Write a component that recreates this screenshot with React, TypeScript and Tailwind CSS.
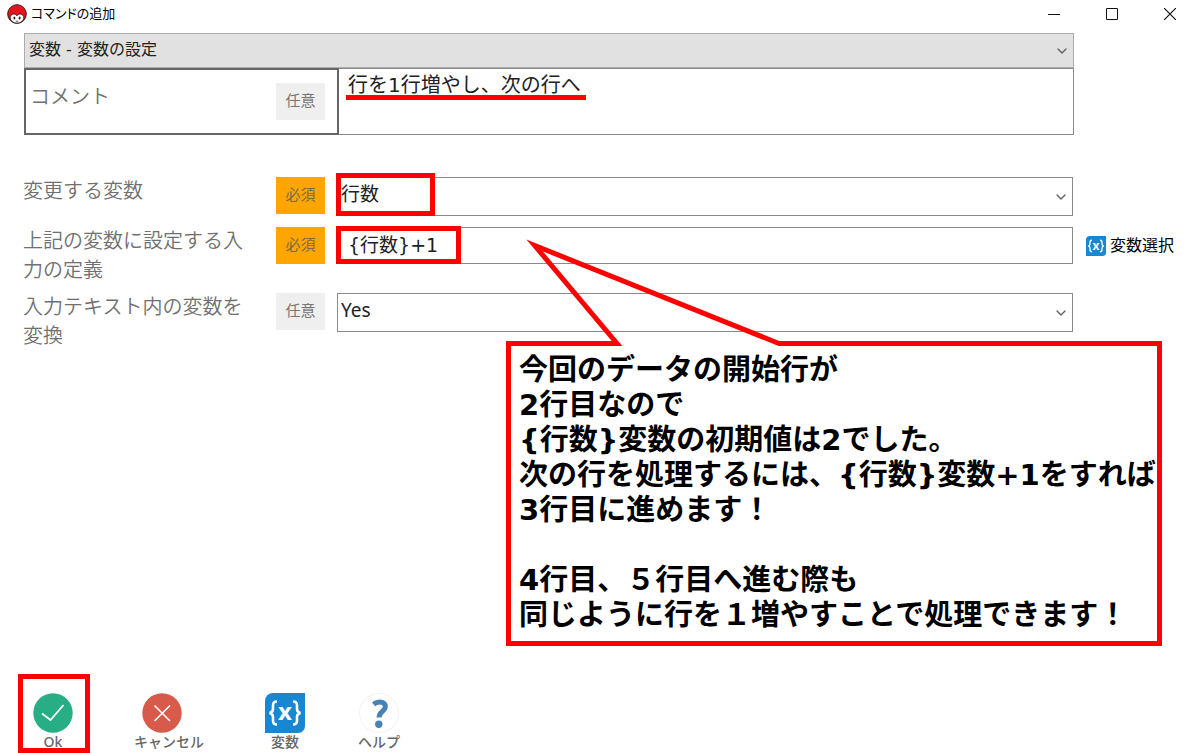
import React from 'react';
import { ChevronDown } from 'lucide-react';

const Badge: React.FC<{ required?: boolean }> = ({ required }) => (
  <span
    className={`flex h-[37px] w-[49px] shrink-0 items-center justify-center text-[15px] ${
      required ? 'bg-[#ffa500] text-[#7d6a45]' : 'bg-[#efefef] text-[#777]'
    }`}
  >
    {required ? '必須' : '任意'}
  </span>
);

const AppLogo: React.FC = () => (
  <svg className="h-5 w-5" viewBox="0 0 20 20" aria-hidden="true">
    <circle cx="10" cy="10" r="9.3" fill="#e8141c" stroke="#3a1a1a" strokeWidth="1" />
    <path d="M3.2 15c-.6-3.6 1.6-5 3.600-5 1.600 0 2.600.7 3.200 1.800.6-1.100 1.600-1.800 3.200-1.800 2 0 4.200 1.400 3.600 5C15.600 17.600 13 19.200 10 19.200S4.400 17.600 3.200 15z" fill="#fff" stroke="#3a1a1a" strokeWidth="1" />
    <ellipse cx="7.4" cy="14" rx="1" ry="1.600" fill="#222" />
    <ellipse cx="12.6" cy="14" rx="1" ry="1.600" fill="#222" />
    <path d="M8.8 17.200h2.400" stroke="#222" strokeWidth=".8" />
  </svg>
);

const VariableIcon: React.FC<{ className: string }> = ({ className }) => (
  <svg className={className} viewBox="0 0 40 40" aria-hidden="true">
    <path d="M8 0h32v33a7 7 0 0 1-7 7H0V8a8 8 0 0 1 8-8z" fill="#1687d0" />
    <path
      d="M12 8.500c-3.500 0-4 1.500-4 4v3.500c0 2.500-.8 3.500-3.500 4 2.700.5 3.500 1.500 3.500 4v3.500c0 2.500.5 4 4 4M28 8.500c3.500 0 4 1.500 4 4v3.500c0 2.500.8 3.500 3.500 4-2.700.5-3.500 1.500-3.500 4v3.500c0 2.500-.5 4-4 4"
      fill="none"
      stroke="#fff"
      strokeWidth="2.600"
    />
    <text x="20" y="27" textAnchor="middle" fill="#fff" fontSize="24" fontWeight="700" fontFamily="Open Sans, sans-serif">
      x
    </text>
  </svg>
);

const OkIcon: React.FC = () => (
  <svg className="h-10 w-10" viewBox="0 0 40 40" aria-hidden="true">
    <circle cx="20" cy="20" r="19.7" fill="#27ae85" />
    <path d="M9 20.5l8.500 6.500L30.500 12" fill="none" stroke="#fff" strokeWidth="1.8" />
  </svg>
);

const CancelIcon: React.FC = () => (
  <svg className="ml-2 h-10 w-10" viewBox="0 0 40 40" aria-hidden="true">
    <circle cx="20" cy="20" r="19.7" fill="#d75a4a" />
    <path d="M12.5 12.5l15.500 15.500M28 12.500L12.500 28" stroke="#fff" strokeWidth="1.6" />
  </svg>
);

const HelpIcon: React.FC = () => (
  <svg className="h-10 w-10" viewBox="0 0 40 40" aria-hidden="true">
    <circle cx="20" cy="20" r="19.5" fill="#fff" stroke="#f1f1f1" />
    <path d="M14.500 11.200c2-1.600 4-2.200 6.200-2.200 3.600 0 5.600 1.800 5.600 4.600 0 5-6.300 4.800-6.300 11" fill="none" stroke="#4682b4" strokeWidth="5" />
    <circle cx="19.800" cy="31.300" r="3.700" fill="#4682b4" />
  </svg>
);

interface SelectBoxProps {
  id: string;
  value: string;
  className: string;
  label?: string;
}

const SelectBox: React.FC<SelectBoxProps> = ({ id, value, className, label }) => (
  <div className="relative">
    <select id={id} aria-label={label} className={`block w-full appearance-none border outline-none ${className}`}>
      <option>{value}</option>
    </select>
    <ChevronDown className="pointer-events-none absolute top-1/2 right-1 h-4 w-4 -translate-y-1/2 text-[#606060]" strokeWidth={2} />
  </div>
);

interface FieldRowProps {
  id: string;
  label: string;
  required?: boolean;
  children: React.ReactNode;
  extra?: React.ReactNode;
}

const FieldRow: React.FC<FieldRowProps> = ({ id, label, required, children, extra }) => (
  <div className="flex min-h-[42px] items-start">
    <label htmlFor={id} className="w-[222px] shrink-0 text-xl leading-[29px] font-[350] text-[#707070]">
      {label}
    </label>
    <div className="mr-3 ml-[31px]">
      <Badge required={required} />
    </div>
    <div className="relative min-w-0 flex-1">{children}</div>
    <div className="w-[127px] shrink-0 pl-[13px]">{extra}</div>
  </div>
);

const Callout: React.FC = () => (
  <div className="absolute top-[341px] left-[506px] w-[656px] border-[5px] border-t-0 border-[#ff0000] pt-3 pb-2 pl-2">
    <svg className="pointer-events-none absolute -top-[111px] -left-[5px] h-[120px] w-[656px]" viewBox="0 0 656 120" aria-hidden="true">
      <path
        d="M0 113.5H111L28.7 15.5L273 113.5H656"
        fill="none"
        stroke="#ff0000"
        strokeWidth="5"
        strokeMiterlimit="10"
      />
    </svg>
    <p className="text-[29px] leading-[35px] font-bold whitespace-nowrap text-black">
      今回のデータの開始行が
      <br />
      2行目なので
      <br />
      {'{行数}'}変数の初期値は2でした。
      <br />
      次の行を処理するには、{'{行数}'}変数+1をすれば
      <br />
      3行目に進めます！
      <br />
      <br />
      4行目、５行目へ進む際も
      <br />
      同じように行を１増やすことで処理できます！
    </p>
  </div>
);

export default function App() {
  const footerButton = "flex flex-col font-['Noto_Sans','Noto_Sans_CJK_JP',sans-serif] text-sm leading-[18px] font-medium text-[#666]";

  return (
    <div className="relative flex min-h-screen flex-col bg-white font-['DejaVu_Sans','Noto_Sans_CJK_JP',sans-serif] text-[#222]">
      <header className="flex h-[33px] items-start justify-between pt-1 pl-[7px]">
        <div className="flex items-center gap-1">
          <AppLogo />
          <h1 className="text-[13px] leading-5 text-black [font-feature-settings:'palt']">コマンドの追加</h1>
        </div>
        <div className="flex gap-[34px] pr-[18px]">
          <button type="button" aria-label="最小化" className="flex h-5 w-6 items-center justify-center">
            <svg className="h-3 w-3" viewBox="0 0 12 12"><path d="M0 6.5h12" stroke="#111" /></svg>
          </button>
          <button type="button" aria-label="最大化" className="flex h-5 w-6 items-center justify-center">
            <svg className="h-3 w-3" viewBox="0 0 12 12"><path d="M.5.5h11v11H.5z" fill="none" stroke="#111" /></svg>
          </button>
          <button type="button" aria-label="閉じる" className="flex h-5 w-6 items-center justify-center">
            <svg className="h-3 w-3" viewBox="0 0 12 12"><path d="M0 0l12 12M12 0L0 12" stroke="#111" strokeWidth="1.2" /></svg>
          </button>
        </div>
      </header>

      <main>
        <section className="mr-[126px] ml-6">
          <SelectBox
            id="command"
            label="コマンド"
            value="変数 - 変数の設定"
            className="h-[35px] border-[#acacac] bg-[#e1e1e1] pb-0.5 pl-1 text-base text-[#222]"
          />
          <div className="flex h-[67px]">
            <div className="flex w-[315px] shrink-0 items-start justify-between border-2 border-[#666] pt-[13px] pr-3 pl-1">
              <label htmlFor="comment" className="text-xl leading-[29px] font-[350] text-[#707070]">
                コメント
              </label>
              <Badge />
            </div>
            <div className="relative flex-1">
              <textarea
                id="comment"
                defaultValue="行を1行増やし、次の行へ"
                className="block h-full w-full resize-none border border-l-0 border-[#8a8a8a] py-0.5 pl-[9px] text-xl leading-[29px] outline-none"
              />
              <div className="absolute top-[27px] left-[7px] h-[5px] w-60 bg-[#ff0000]" />
            </div>
          </div>
        </section>

        <section className="mt-[42px] flex flex-col gap-2 pl-[23px]">
          <FieldRow id="target" label="変更する変数" required>
            <SelectBox id="target" value="行数" className="h-[39px] border-[#8a8a8a] bg-white pb-1 pl-[3px] text-[19px]" />
            <div className="pointer-events-none absolute -top-1 -left-px h-[43px] w-[99px] border-[5px] border-[#ff0000]" />
          </FieldRow>
          <FieldRow
            id="definition"
            label="上記の変数に設定する入力の定義"
            required
            extra={
              <button type="button" className="flex h-[37px] items-center gap-1 text-base whitespace-nowrap text-black">
                <VariableIcon className="h-5 w-5" />
                変数選択
              </button>
            }
          >
            <input
              id="definition"
              type="text"
              defaultValue="{行数}+1"
              className="block h-[37px] w-full border border-[#8a8a8a] pb-1 pl-2.5 text-[19px] outline-none"
            />
            <div className="pointer-events-none absolute -top-px -left-px h-[38px] w-[125px] border-[5px] border-[#ff0000]" />
          </FieldRow>
          <FieldRow id="convert" label="入力テキスト内の変数を変換">
            <SelectBox
              id="convert"
              value="Yes"
              className="h-[39px] border-[#8a8a8a] bg-white pb-1 pl-[3px] font-['Noto_Sans',sans-serif] text-[19px]"
            />
          </FieldRow>
        </section>
      </main>

      <Callout />

      <footer className="mt-auto grid grid-cols-[101px_131px_93px_auto] justify-start pb-0.5 pl-[33px]">
        <div className="relative">
          <button type="button" className={`${footerButton} items-center`}>
            <OkIcon />
            Ok
          </button>
          <div className="pointer-events-none absolute -top-[19px] -left-[15px] h-[79px] w-[72px] border-[5px] border-[#ff0000]" />
        </div>
        <button type="button" className={`${footerButton} items-start`}>
          <CancelIcon />
          キャンセル
        </button>
        <button type="button" className={`${footerButton} w-10 items-center`}>
          <VariableIcon className="h-10 w-10" />
          変数
        </button>
        <button type="button" className={`${footerButton} items-center`}>
          <HelpIcon />
          ヘルプ
        </button>
      </footer>
    </div>
  );
}
